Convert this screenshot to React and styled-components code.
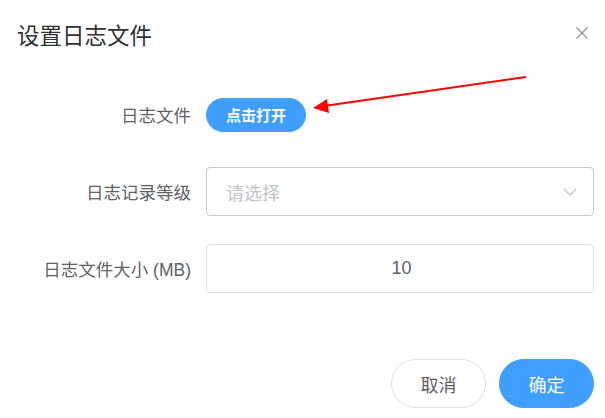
import React from 'react'
import styled, { createGlobalStyle } from 'styled-components'

const GlobalStyle = createGlobalStyle`
  html, body {
    margin: 0;
    padding: 0;
    background: #fff;
    font-family: "Liberation Sans", "Noto Sans CJK SC", sans-serif;
  }
`

const Dialog = styled.div`
  position: relative;
  width: 605px;
  height: 418px;
  box-sizing: border-box;
  background: #fff;
`

const Header = styled.div`
  display: flex;
  align-items: center;
  justify-content: space-between;
  padding: 24px 16px 0 17px;
  height: 26px;
`

const Title = styled.h2`
  margin: 0;
  font-size: 22.5px;
  line-height: 26px;
  font-weight: normal;
  color: #303133;
`

const CloseButton = styled.button`
  border: 0;
  background: none;
  padding: 0;
  width: 14px;
  height: 14px;
  display: flex;
  margin-top: -8px;
  cursor: pointer;
`

const Form = styled.div`
  display: grid;
  grid-template-columns: 206px 1fr;
  grid-auto-rows: 49px;
  row-gap: 28px;
  padding: 40px 11px 0 0;
`

const Label = styled.label`
  display: flex;
  align-items: center;
  justify-content: flex-end;
  padding-right: 15px;
  font-size: 17.5px;
  color: #606266;
`

const Field = styled.div`
  display: flex;
  align-items: center;
`

const PillButton = styled.button`
  height: ${p => (p.$small ? '34px' : '49px')};
  padding: 0 ${p => (p.$small ? '19px' : '0')};
  width: ${p => (p.$small ? 'auto' : '95px')};
  border-radius: 999px;
  border: 1px solid ${p => (p.$primary ? '#409eff' : '#dcdfe6')};
  background: ${p => (p.$primary ? '#409eff' : '#fff')};
  color: ${p => (p.$primary ? '#fff' : '#606266')};
  font-family: inherit;
  font-size: ${p => (p.$small ? '15px' : '18px')};
  font-weight: ${p => (p.$small ? 'bold' : 'normal')};
  cursor: pointer;
`

const Box = styled.div`
  flex: 1;
  height: 49px;
  box-sizing: border-box;
  border: 1px solid ${p => (p.$dark ? '#c8c9d0' : '#dcdfe6')};
  border-radius: 4px;
  display: flex;
  align-items: center;
  justify-content: ${p => (p.$center ? 'center' : 'space-between')};
  padding: 0 16px 0 19px;
  font-size: 18px;
  color: ${p => (p.$placeholder ? '#c0c4cc' : '#606266')};
`

const Footer = styled.div`
  display: flex;
  justify-content: flex-end;
  gap: 13px;
  padding: 66px 11px 0 0;
`

const Arrow = styled.svg`
  position: absolute;
  left: 0;
  top: 0;
  pointer-events: none;
`

export default function App() {
  return (
    <>
      <GlobalStyle />
      <Dialog>
        <Header>
          <Title>设置日志文件</Title>
          <CloseButton aria-label="close">
            <svg width="14" height="14" viewBox="0 0 14 14">
              <path d="M1.5 1.5 L12.5 12.5 M12.5 1.5 L1.5 12.5" stroke="#909399" strokeWidth="1.2" fill="none" />
            </svg>
          </CloseButton>
        </Header>
        <Form>
          <Label>日志文件</Label>
          <Field>
            <PillButton $primary $small>点击打开</PillButton>
          </Field>
          <Label>日志记录等级</Label>
          <Field>
            <Box $dark $placeholder>
              请选择
              <svg width="14" height="8" viewBox="0 0 14 8">
                <path d="M1 1 L7 7 L13 1" stroke="#c0c4cc" strokeWidth="1.2" fill="none" />
              </svg>
            </Box>
          </Field>
          <Label>日志文件大小 (MB)</Label>
          <Field>
            <Box $center>10</Box>
          </Field>
        </Form>
        <Footer>
          <PillButton>取消</PillButton>
          <PillButton $primary>确定</PillButton>
        </Footer>
        <Arrow width="605" height="418" viewBox="0 0 605 418">
          <line x1="526" y1="77" x2="324" y2="106" stroke="#f00" strokeWidth="2" />
          <polygon points="313,108 327,99 329,113" fill="#f00" />
        </Arrow>
      </Dialog>
    </>
  )
}
